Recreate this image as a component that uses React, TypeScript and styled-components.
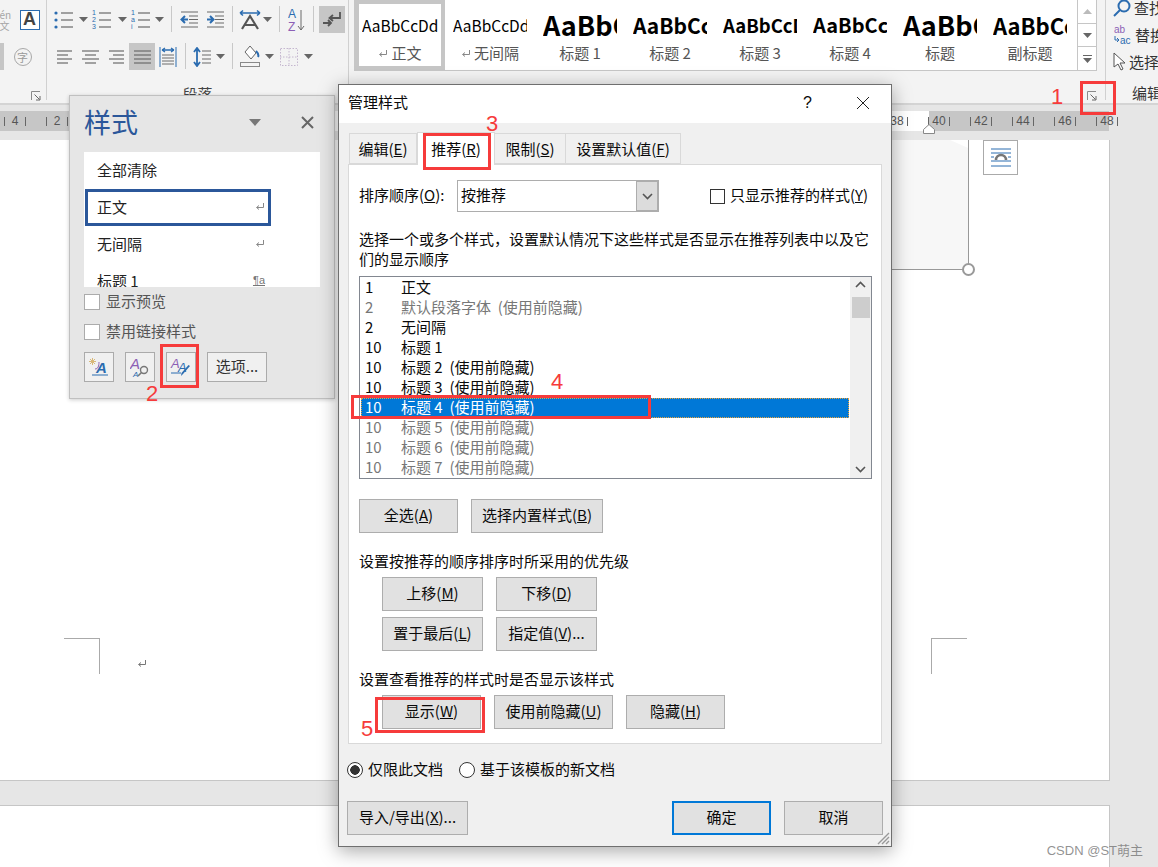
import React from "react"
import styled, { createGlobalStyle } from "styled-components"

const GlobalStyle = createGlobalStyle`
    html, body { margin: 0; padding: 0; background: #fff; }
    body { font-family: "Noto Sans CJK SC", "Liberation Sans", sans-serif; overflow: hidden; }
    * { box-sizing: border-box; }
`

const RED = "#f63b3b"
const BLUE = "#2b6cb0"
const GRAY = "#6a6a6a"

const Screen = styled.div`
    position: relative;
    width: 1158px;
    height: 867px;
    overflow: hidden;
    background: #e6e6e6;
`
// Noto sits a little low in its line box, this lifts a label by 2px
const Lift = styled.span`
    display: block;
    padding-bottom: 4px;
    white-space: nowrap;
`

/* ribbon */
const Ribbon = styled.div`
    display: flex;
    height: 105px;
    background: #f3f3f3;
    border-bottom: 2px solid #d4d4d4;
    overflow: hidden;
`
const RibbonGroup = styled.div<{ $w: number }>`
    position: relative;
    flex: none;
    width: ${p => p.$w}px;
    height: 100px;
    padding-top: 6px;
    border-right: 1px solid #d0d0d0;
    display: flex;
    flex-direction: column;
    gap: 10px;
`
const ToolRow = styled.div<{ $pad?: number }>`
    display: flex;
    height: 27px;
    padding-left: ${p => p.$pad ?? 0}px;
`
const Tool = styled.div<{ $w: number; $on?: boolean }>`
    flex: none;
    width: ${p => p.$w}px;
    height: 27px;
    display: flex;
    align-items: center;
    justify-content: center;
    background: ${p => (p.$on ? "#c6c6c6" : "transparent")};
    svg { flex: none; }
`
const ToolSep = styled.div<{ $w: number }>`
    flex: none;
    width: ${p => p.$w}px;
    display: flex;
    justify-content: center;
    &::after {
        content: "";
        width: 1px;
        height: 26px;
        background: #c8c8c8;
    }
`
const GroupLabel = styled.div`
    position: absolute;
    left: 0;
    right: 0;
    top: 84px;
    text-align: center;
    font-size: 15px;
    line-height: 20px;
    color: #444;
`
const Launcher = styled.div<{ $right: number }>`
    position: absolute;
    right: ${p => p.$right}px;
    top: 91px;
    line-height: 0;
`
const FontBox = styled.div`
    width: 20px;
    height: 20px;
    border: 1px solid #2b6cb0;
    background: #fff;
    display: flex;
    align-items: center;
    justify-content: center;
    font: bold 18px "Liberation Sans", sans-serif;
    color: #444;
`
const PhoneticText = styled.div`
    width: 12px;
    margin-left: -4px;
    font-size: 10px;
    line-height: 11px;
    color: #a5a5a5;
    overflow: hidden;
`
const CharCircle = styled.div`
    width: 18px;
    height: 18px;
    border: 1px solid #a8a8a8;
    border-radius: 50%;
    display: flex;
    align-items: center;
    justify-content: center;
    font-size: 11px;
    color: #9a9a9a;
`

const GalleryGroup = styled.div`
    position: relative;
    flex: none;
    width: 748px;
    margin-left: 5px;
    height: 100px;
`
const Gallery = styled.div`
    display: flex;
    width: 743px;
    height: 72px;
    margin-top: -1px;
    background: #fff;
    border: 1px solid #c6c6c6;
`
const GalleryItem = styled.div<{ $on?: boolean }>`
    flex: none;
    width: 90px;
    height: 70px;
    padding-top: ${p => (p.$on ? 6 : 10)}px;
    border: ${p => (p.$on ? "4px solid #c6c6c6" : "none")};
    text-align: center;
`
const GalleryPreview = styled.div<{ $size: number; $bold?: boolean; $on?: boolean }>`
    height: 32px;
    margin: 0 ${p => (p.$on ? 3 : 8)}px;
    overflow: hidden;
    white-space: nowrap;
    text-align: left;
    font-family: "Noto Sans CJK SC", sans-serif;
    font-size: ${p => p.$size}px;
    font-weight: ${p => (p.$bold ? 700 : 400)};
    line-height: 30px;
    color: #000;
`
const GalleryName = styled.div`
    display: flex;
    align-items: center;
    justify-content: center;
    gap: 3px;
    font-size: 15px;
    line-height: 22px;
    color: #555;
`
const GalleryScroll = styled.div`
    flex: none;
    width: 19px;
    margin-left: 2px;
    display: flex;
    flex-direction: column;
    border-left: 1px solid #c6c6c6;
`
const ScrollCell = styled.div`
    flex: 1;
    display: flex;
    align-items: center;
    justify-content: center;
    & + & { border-top: 1px solid #c6c6c6; }
`
const EditGroup = styled.div`
    position: relative;
    flex: none;
    margin-left: 3px;
    width: 60px;
    height: 100px;
    padding-left: 7px;
    border-left: 1px solid #d0d0d0;
    display: flex;
    flex-direction: column;
`
const EditRow = styled.div`
    display: flex;
    align-items: center;
    gap: 3px;
    height: 27px;
    margin-top: -6px;
    margin-bottom: 6px;
    font-size: 15px;
    color: #333;
    white-space: nowrap;
    svg { flex: none; }
`
const EditLabel = styled.div`
    position: absolute;
    left: 26px;
    top: 83px;
    font-size: 15px;
    line-height: 20px;
    color: #333;
    white-space: nowrap;
`

/* ruler */
const RulerBar = styled.div`
    height: 35px;
    padding-top: 6px;
`
const RulerTrack = styled.div`
    position: relative;
    display: flex;
    width: 1109px;
    height: 20px;
    background: linear-gradient(90deg, #c6c6c6 0 69px, #fff 69px 929px, #c6c6c6 929px);
`
const RulerStrip = styled.div`
    display: flex;
    margin-left: -6px;
`
const RulerCell = styled.div`
    flex: none;
    width: 42px;
    height: 20px;
    display: flex;
    align-items: center;
    justify-content: space-between;
    padding: 0 10px;
    font: 12px/20px "Liberation Sans", sans-serif;
    color: #555;
    &::before, &::after {
        content: "";
        width: 1px;
        height: 9px;
        background: #666;
    }
`
const TabMarker = styled.div`
    position: absolute;
    left: 923px;
    top: 13px;
    line-height: 0;
`

/* document */
const Workspace = styled.div`
    display: flex;
    height: 727px;
`
const Pages = styled.div`
    flex: none;
    width: 1110px;
    display: flex;
    flex-direction: column;
    gap: 24px;
`
const Page = styled.div`
    position: relative;
    height: 641px;
    background: #fff;
    border-right: 1px solid #c6c6c6;
    border-bottom: 1px solid #c6c6c6;
`
const NextPage = styled.div`
    height: 62px;
    background: #fff;
    border-right: 1px solid #c6c6c6;
    border-top: 1px solid #c6c6c6;
`
const CropMark = styled.div<{ $x: number }>`
    position: absolute;
    left: ${p => p.$x}px;
    top: 498px;
    width: 36px;
    height: 36px;
    border-top: 1px solid #aaa;
    border-right: ${p => (p.$x < 500 ? "1px solid #aaa" : "none")};
    border-left: ${p => (p.$x > 500 ? "1px solid #aaa" : "none")};
`
const ParaMark = styled.div`
    position: absolute;
    left: 137px;
    top: 519px;
    line-height: 0;
`
const PictureFrame = styled.div`
    position: absolute;
    left: 700px;
    top: 0;
    width: 269px;
    height: 130px;
    background: #f7f7f7;
    border-right: 1px solid #999;
    border-bottom: 1px solid #999;
    &::before {
        content: "";
        position: absolute;
        right: 0;
        top: 0;
        width: 18px;
        height: 8px;
        background: #fff;
        clip-path: polygon(0 0, 100% 0, 100% 100%);
    }
`
const PictureHandle = styled.div`
    position: absolute;
    right: -7px;
    bottom: -7px;
    width: 13px;
    height: 13px;
    border: 2px solid #999;
    border-radius: 50%;
    background: #fff;
`
const LayoutButton = styled.div`
    position: absolute;
    left: 983px;
    top: 0;
    width: 35px;
    height: 35px;
    background: #fff;
    border: 1px solid #aaa;
    display: flex;
    align-items: center;
    justify-content: center;
`
const Gutter = styled.div`
    flex: 1;
    background: #e6e6e6;
`

/* styles pane */
const Pane = styled.div`
    position: absolute;
    left: 69px;
    top: 95px;
    width: 266px;
    height: 304px;
    background: #e6e6e6;
    border: 1px solid #c0c0c0;
    box-shadow: 0 1px 4px rgba(0, 0, 0, 0.2);
    padding: 0 14px;
`
const PaneHeader = styled.div`
    height: 56px;
    padding-bottom: 4px;
    display: flex;
    align-items: center;
    justify-content: space-between;
    padding-right: 6px;
`
const PaneTitleText = styled.div`
    font-size: 27px;
    line-height: 40px;
    color: #2b579a;
`
const PaneActions = styled.div`
    display: flex;
    align-items: center;
    gap: 40px;
    line-height: 0;
`
const StyleList = styled.div`
    height: 135px;
    background: #fff;
    overflow: hidden;
`
const StyleRow = styled.div<{ $on?: boolean }>`
    width: 186px;
    height: 37px;
    margin-left: 1px;
    padding: 0 3px 3px 9px;
    display: flex;
    align-items: center;
    justify-content: space-between;
    font-size: 15px;
    color: #222;
    border: 3px solid ${p => (p.$on ? "#2b579a" : "transparent")};
    svg { flex: none; }
`
const ParaSign = styled.span`
    font: 11px "Liberation Sans", sans-serif;
    color: #777;
    text-decoration: underline;
`
const PaneCheck = styled.label`
    display: flex;
    align-items: center;
    gap: 6px;
    height: 16px;
    margin-top: 14px;
    font-size: 15px;
    color: #555;
    &:first-of-type { margin-top: 7px; }
`
const PaneBox = styled.span`
    width: 16px;
    height: 16px;
    background: #fff;
    border: 1px solid #ababab;
`
const PaneTools = styled.div`
    display: flex;
    gap: 11px;
    margin-top: 12px;
`
const PaneTool = styled.div<{ $w?: number }>`
    width: ${p => p.$w ?? 30}px;
    height: 30px;
    background: #f0f0f0;
    border: 1px solid #ababab;
    display: flex;
    align-items: center;
    justify-content: center;
    font-size: 15px;
    color: #333;
`

/* dialog */
const Dialog = styled.div`
    position: absolute;
    left: 338px;
    top: 84px;
    width: 554px;
    height: 763px;
    background: #f0f0f0;
    border: 1px solid #6f6f6f;
    box-shadow: 0 4px 18px rgba(0, 0, 0, 0.35);
    font-size: 15px;
    color: #0a0a0a;
    display: flex;
    flex-direction: column;
`
const TitleBar = styled.div`
    flex: none;
    height: 38px;
    background: #fff;
    display: flex;
    align-items: center;
    justify-content: space-between;
    padding: 0 21px 2px 9px;
`
const TitleActions = styled.div`
    display: flex;
    align-items: center;
    gap: 44px;
    font: 16px "Liberation Sans", sans-serif;
`
const DialogBody = styled.div`
    flex: 1;
    padding: 0 9px;
    position: relative;
`
const TabRow = styled.div`
    display: flex;
    align-items: flex-end;
    height: 41px;
    padding-left: 1px;
`
const Tab = styled.div<{ $w: number; $on?: boolean }>`
    width: ${p => p.$w}px;
    height: ${p => (p.$on ? 33 : 31)}px;
    margin-bottom: ${p => (p.$on ? -1 : 0)}px;
    padding-bottom: ${p => (p.$on ? 1 : 0)}px;
    background: ${p => (p.$on ? "#fff" : "#f0f0f0")};
    border: 1px solid #d9d9d9;
    border-bottom: ${p => (p.$on ? "none" : "1px solid #d9d9d9")};
    border-left: ${p => (p.$on ? "1px solid #d9d9d9" : "none")};
    display: flex;
    align-items: center;
    justify-content: center;
    white-space: nowrap;
    position: relative;
    &:first-child { border-left: 1px solid #d9d9d9; }
`
const TabPanel = styled.div`
    height: 580px;
    background: #fff;
    border: 1px solid #d9d9d9;
    padding: 15px 9px 14px 10px;
`
const SortRow = styled.div`
    display: flex;
    align-items: center;
    height: 32px;
`
const SortLabel = styled(Lift)`
    width: 98px;
`
const SelectBox = styled.div`
    width: 202px;
    height: 32px;
    border: 1px solid #adadad;
    display: flex;
    justify-content: space-between;
    align-items: center;
    padding-left: 3px;
`
const SelectArrow = styled.div`
    width: 22px;
    height: 30px;
    background: #dcdcdc;
    border: 1px solid #adadad;
    display: flex;
    align-items: center;
    justify-content: center;
`
const OnlyCheck = styled.label`
    margin-left: auto;
    margin-right: 4px;
    display: flex;
    align-items: center;
    gap: 5px;
`
const CheckBox = styled.span`
    width: 15px;
    height: 15px;
    background: #fff;
    border: 1px solid #333;
`
const Paragraph = styled.p`
    margin: 17px 0 7px;
    line-height: 20px;
`
const ListBox = styled.div`
    position: relative;
    height: 203px;
    border: 1px solid #828790;
    padding: 1px 22px 0 1px;
    overflow: hidden;
`
const ListRow = styled.div<{ $muted?: boolean; $on?: boolean }>`
    display: flex;
    height: 20px;
    line-height: 18px;
    padding-left: 4px;
    white-space: pre;
    color: ${p => (p.$on ? "#fff" : p.$muted ? "#777" : "#0a0a0a")};
    background: ${p => (p.$on ? "#0078d7" : "transparent")};
    outline: ${p => (p.$on ? "1px dotted #e8a33d" : "none")};
    outline-offset: -1px;
`
const ListNum = styled.span`
    width: 36px;
`
const ListScroll = styled.div`
    position: absolute;
    right: 0;
    top: 0;
    bottom: 0;
    width: 21px;
    background: #f0f0f0;
    display: flex;
    flex-direction: column;
    align-items: center;
    padding-top: 4px;
    svg { display: block; }
`
const ScrollThumb = styled.div`
    width: 18px;
    height: 21px;
    margin-top: 9px;
    background: #cdcdcd;
`
const ScrollDown = styled.div`
    margin-top: auto;
    margin-bottom: 5px;
    line-height: 0;
`
const ButtonRow = styled.div<{ $top: number; $indent?: number }>`
    display: flex;
    gap: 13px;
    margin-top: ${p => p.$top}px;
    padding-left: ${p => p.$indent ?? 0}px;
`
const Button = styled.div<{ $w: number; $primary?: boolean }>`
    width: ${p => p.$w}px;
    height: 34px;
    padding-bottom: 3px;
    background: #e1e1e1;
    border: ${p => (p.$primary ? "2px solid #0078d7" : "1px solid #adadad")};
    display: flex;
    align-items: center;
    justify-content: center;
    white-space: nowrap;
`
const SectionLabel = styled.div`
    margin-top: 18px;
    line-height: 20px;
`
const RadioRow = styled.div`
    display: flex;
    align-items: center;
    height: 20px;
    margin-top: 16px;
    margin-left: -1px;
`
const Radio = styled.span<{ $on?: boolean }>`
    width: 16px;
    height: 16px;
    margin-right: 5px;
    border: 1px solid #333;
    border-radius: 50%;
    background: ${p => (p.$on ? "radial-gradient(circle, #333 0 4.5px, #fff 5px)" : "#fff")};
`
const RadioText = styled(Lift)`
    margin-right: 16px;
`
const Footer = styled.div`
    display: flex;
    justify-content: space-between;
    margin: 21px -1px 0 -1px;
`
const FooterRight = styled.div`
    display: flex;
    gap: 13px;
`
const ResizeGrip = styled.div`
    position: absolute;
    right: 1px;
    bottom: 1px;
    line-height: 0;
`

/* annotations */
const RedBox = styled.div<{ $x: number; $y: number; $w: number; $h: number }>`
    position: absolute;
    left: ${p => p.$x}px;
    top: ${p => p.$y}px;
    width: ${p => p.$w}px;
    height: ${p => p.$h}px;
    border: 3px solid ${RED};
`
const RedNum = styled.div<{ $x: number; $y: number }>`
    position: absolute;
    left: ${p => p.$x}px;
    top: ${p => p.$y}px;
    font: 22px/24px "Liberation Sans", sans-serif;
    color: ${RED};
`
const Watermark = styled.div`
    position: absolute;
    right: 15px;
    top: 841px;
    font: 13px/20px "Liberation Sans", "Noto Sans CJK SC", sans-serif;
    color: rgba(110, 110, 110, 0.75);
`

/* drawings */
const Caret = () => (
    <svg width="9" height="5"><path d="M0 0h9L4.5 5z" fill="#666" /></svg>
)
const ReturnMark = ({ c = "#888" }: { c?: string }) => (
    <svg width="10" height="9" fill="none" stroke={c} strokeWidth="1">
        <path d="M8.5 1v4.5H2M4 3.5L1.5 5.5 4 7.5" />
    </svg>
)
const Hlines = ({ ys, x1, x2, w = 18, h = 22 }: { ys: number[]; x1: number[]; x2: number[]; w?: number; h?: number }) => (
    <svg width={w} height={h} stroke={GRAY} strokeWidth="1.2">
        {ys.map((y, i) => <line key={y} x1={x1[i % x1.length]} x2={x2[i % x2.length]} y1={y} y2={y} />)}
    </svg>
)
const ListIcon = ({ marks }: { marks: string[] }) => (
    <svg width="20" height="22" fontFamily="Liberation Sans" fontSize="7" fill={BLUE}>
        {marks.map((m, i) => (
            <g key={i}>
                {m === "•" ? <circle cx="2" cy={4 + i * 7} r="1.6" /> : <text x="0" y={6 + i * 7}>{m}</text>}
                <line x1="7" x2="19" y1={4 + i * 7} y2={4 + i * 7} stroke={GRAY} strokeWidth="1.2" />
            </g>
        ))}
    </svg>
)
const IndentIcon = ({ right }: { right?: boolean }) => (
    <svg width="19" height="19" fill="none">
        <g stroke={GRAY} strokeWidth="1.2">
            <path d="M1 2h17M9 6h9M9 9.5h9M9 13h9M1 17h17" />
        </g>
        <path d={right ? "M1 9.5h6M4 6l3.5 3.5L4 13" : "M8 9.5H2M5 6L1.5 9.5 5 13"} stroke={BLUE} strokeWidth="2" />
    </svg>
)
const TextDirIcon = () => (
    <svg width="22" height="22" fill="none">
        <path d="M1 4h20M1 4l3-2.5M1 4l3 2.5M21 4l-3-2.5M21 4l-3 2.5" stroke={BLUE} strokeWidth="1.6" />
        <path d="M3 20l8-13 8 13M6 16h10" stroke="#555" strokeWidth="2.2" />
    </svg>
)
const SortIcon = () => (
    <svg width="18" height="26" fontFamily="Liberation Sans" fontSize="12">
        <text x="0" y="11" fill={BLUE}>A</text>
        <text x="0" y="24" fill="#8c5fb5">Z</text>
        <path d="M13 3v20M10 19l3 4 3-4" fill="none" stroke={GRAY} />
    </svg>
)
const PilcrowIcon = () => (
    <svg width="20" height="18" fill="none" stroke="#555" strokeWidth="1.8">
        <path d="M18 1v6H8M11 4L7.5 7 11 10" />
        <path d="M1 12h8M6 9l3 3-3 3" />
    </svg>
)
const DistributeIcon = () => (
    <svg width="18" height="20" fill="none">
        <path d="M1 0v20M17 0v20" stroke={BLUE} />
        <path d="M3 3h12M3 3l3-2M3 3l3 2M15 3l-3-2M15 3l-3 2" stroke={BLUE} strokeWidth="1.3" />
        <path d="M3 8h12M3 11h12M3 14h12M3 17h12" stroke={GRAY} />
    </svg>
)
const LineSpaceIcon = () => (
    <svg width="18" height="20" fill="none">
        <path d="M4 2v16M1 5l3-4 3 4M1 15l3 4 3-4" stroke={BLUE} strokeWidth="1.8" />
        <path d="M9 4h9M9 8h9M9 12h9M9 16h9" stroke={GRAY} strokeWidth="1.2" />
    </svg>
)
const ShadingIcon = () => (
    <svg width="20" height="23" fill="none">
        <path d="M10 1l6 7-5 6-6-7z" stroke="#666" fill="#fff" />
        <path d="M16 6c2 2 3 4 2 6" stroke={BLUE} strokeWidth="2" />
        <rect x="0.5" y="17.5" width="19" height="4" stroke="#888" />
    </svg>
)
const BorderIcon = () => (
    <svg width="18" height="18" fill="none" stroke="#c4b6cf" strokeDasharray="1.5 1.5">
        <rect x="0.5" y="0.5" width="17" height="17" />
        <path d="M9 0v18M0 9h18" />
    </svg>
)
const LauncherIcon = () => (
    <svg width="10" height="10" fill="none" stroke="#8a8a8a">
        <path d="M.5 9V.5H9" />
        <path d="M3.5 3.5l5 5M9 5v4H5" stroke="#666" />
    </svg>
)
const SearchIcon = () => (
    <svg width="18" height="18" fill="none" stroke="#2b6cb0" strokeWidth="2">
        <circle cx="11" cy="7" r="5.5" /><path d="M7 11l-6 6" />
    </svg>
)
const ReplaceIcon = () => (
    <svg width="19" height="22" fontFamily="Liberation Sans" fontSize="10">
        <text x="1" y="9" fill="#8c5fb5">ab</text>
        <text x="7" y="20" fill={BLUE}>ac</text>
        <path d="M2 12v4h4M4 14l2 2-2 2" fill="none" stroke={BLUE} />
    </svg>
)
const CursorIcon = () => (
    <svg width="13" height="19" fill="#fff" stroke="#555"><path d="M1 1v14l4-3 3 6 2-1-3-6h5z" /></svg>
)
const WrapIcon = () => (
    <svg width="20" height="19" fill="none">
        <path d="M0 1h20M0 5h20M0 13h20M0 18h20M0 9h3M17 9h3" stroke={BLUE} />
        <path d="M5 12a5 5 0 0110 0" stroke="#777" strokeWidth="2.6" />
    </svg>
)
const NewStyleIcon = () => (
    <svg width="20" height="20" fontFamily="Liberation Sans" fontSize="15" fontStyle="italic" fontWeight="700">
        <path d="M1 2l5 5M6 2L1 7M3.5 1v7M0 4.5h7" stroke="#d8b878" />
        <path d="M6 12c3 0 4-3 4-7" stroke="#8c5fb5" fill="none" />
        <text x="7" y="16" fill={BLUE}>A</text>
        <line x1="3" x2="19" y1="18" y2="18" stroke={BLUE} />
    </svg>
)
const InspectIcon = () => (
    <svg width="20" height="20" fontFamily="Liberation Sans" fontSize="15" fontStyle="italic">
        <text x="0" y="12" fill="#8c5fb5">A</text>
        <text x="3" y="20" fontSize="8" fill={BLUE}>A</text>
        <circle cx="14" cy="13" r="3.5" fill="none" stroke="#777" strokeWidth="1.4" />
        <path d="M11.5 15.5L8 19" stroke="#777" strokeWidth="1.6" />
    </svg>
)
const ManageIcon = () => (
    <svg width="22" height="20" fontFamily="Liberation Sans" fontSize="13" fontStyle="italic">
        <text x="1" y="11" fill="#8c5fb5">A</text>
        <text x="8" y="15" fill={BLUE}>A</text>
        <line x1="1" x2="11" y1="16" y2="16" stroke={BLUE} />
        <path d="M20 9l-7 8-2 2 .5-3 7-8z" fill={BLUE} />
    </svg>
)
const Chevron = ({ up }: { up?: boolean }) => (
    <svg width="11" height="7" fill="none" stroke="#555" strokeWidth="1.6">
        <path d={up ? "M1 6l4.5-4.5L10 6" : "M1 1l4.5 4.5L10 1"} />
    </svg>
)
const CloseX = ({ size, c, w }: { size: number; c: string; w: number }) => (
    <svg width={size} height={size} stroke={c} strokeWidth={w}>
        <path d={`M1 1L${size - 1} ${size - 1}M${size - 1} 1L1 ${size - 1}`} />
    </svg>
)

const gallery = [
    { preview: "AaBbCcDd", name: "正文", size: 15.5, mark: true, on: true },
    { preview: "AaBbCcDd", name: "无间隔", size: 15.5, mark: true },
    { preview: "AaBbC", name: "标题 1", size: 27, bold: true },
    { preview: "AaBbCc", name: "标题 2", size: 21, bold: true },
    { preview: "AaBbCcD", name: "标题 3", size: 18.5, bold: true },
    { preview: "AaBbCc", name: "标题 4", size: 20, bold: true },
    { preview: "AaBbC", name: "标题", size: 27, bold: true },
    { preview: "AaBbCc", name: "副标题", size: 22, bold: true },
]

const listRows: { n: number; t: string; muted?: boolean; on?: boolean }[] = [
    { n: 1, t: "正文" },
    { n: 2, t: "默认段落字体  (使用前隐藏)", muted: true },
    { n: 2, t: "无间隔" },
    { n: 10, t: "标题 1" },
    { n: 10, t: "标题 2  (使用前隐藏)" },
    { n: 10, t: "标题 3  (使用前隐藏)" },
    { n: 10, t: "标题 4  (使用前隐藏)", on: true },
    { n: 10, t: "标题 5  (使用前隐藏)", muted: true },
    { n: 10, t: "标题 6  (使用前隐藏)", muted: true },
    { n: 10, t: "标题 7  (使用前隐藏)", muted: true },
]

// cells 2..20 lie under the two windows, only the outer ones show a number
const rulerCells = Array.from({ length: 27 }, (_, i) => (i < 2 || i > 20 ? String(Math.abs(2 * (i - 2))) : ""))

export default function App() {
    return (
        <Screen>
            <GlobalStyle />
            <Ribbon>
                <RibbonGroup $w={47}>
                    <ToolRow>
                        <Tool $w={15}><PhoneticText>én文</PhoneticText></Tool>
                        <Tool $w={29}><FontBox>A</FontBox></Tool>
                    </ToolRow>
                    <ToolRow>
                        <Tool $w={4} $on />
                        <Tool $w={37}><CharCircle>字</CharCircle></Tool>
                    </ToolRow>
                    <Launcher $right={5}><LauncherIcon /></Launcher>
                </RibbonGroup>
                <RibbonGroup $w={302}>
                    <ToolRow $pad={6}>
                        <Tool $w={22}><ListIcon marks={["•", "•", "•"]} /></Tool>
                        <Tool $w={16}><Caret /></Tool>
                        <Tool $w={22}><ListIcon marks={["1", "2", "3"]} /></Tool>
                        <Tool $w={18}><Caret /></Tool>
                        <Tool $w={20}><ListIcon marks={["1", "a", "i"]} /></Tool>
                        <Tool $w={16}><Caret /></Tool>
                        <ToolSep $w={8} />
                        <Tool $w={28}><IndentIcon /></Tool>
                        <Tool $w={24}><IndentIcon right /></Tool>
                        <ToolSep $w={10} />
                        <Tool $w={26}><TextDirIcon /></Tool>
                        <Tool $w={8}><Caret /></Tool>
                        <ToolSep $w={16} />
                        <Tool $w={20}><SortIcon /></Tool>
                        <ToolSep $w={12} />
                        <Tool $w={26} $on><PilcrowIcon /></Tool>
                    </ToolRow>
                    <ToolRow $pad={4}>
                        <Tool $w={26}><Hlines w={15} h={16} ys={[2, 6, 10, 14]} x1={[0]} x2={[15, 11]} /></Tool>
                        <Tool $w={26}><Hlines w={17} h={16} ys={[2, 6, 10, 14]} x1={[0, 3]} x2={[17, 14]} /></Tool>
                        <Tool $w={26}><Hlines w={15} h={16} ys={[2, 6, 10, 14]} x1={[0, 4]} x2={[15]} /></Tool>
                        <Tool $w={26} $on><Hlines w={17} h={16} ys={[2, 6, 10, 14]} x1={[0]} x2={[17]} /></Tool>
                        <Tool $w={26}><DistributeIcon /></Tool>
                        <ToolSep $w={8} />
                        <Tool $w={26}><LineSpaceIcon /></Tool>
                        <Tool $w={10}><Caret /></Tool>
                        <ToolSep $w={14} />
                        <Tool $w={22}><ShadingIcon /></Tool>
                        <Tool $w={16}><Caret /></Tool>
                        <Tool $w={24}><BorderIcon /></Tool>
                        <Tool $w={14}><Caret /></Tool>
                    </ToolRow>
                    <GroupLabel>段落</GroupLabel>
                </RibbonGroup>
                <GalleryGroup>
                    <Gallery>
                        {gallery.map(g => (
                            <GalleryItem key={g.name} $on={g.on}>
                                <GalleryPreview $size={g.size} $bold={g.bold} $on={g.on}>{g.preview}</GalleryPreview>
                                <GalleryName>{g.mark && <ReturnMark />}{g.name}</GalleryName>
                            </GalleryItem>
                        ))}
                        <GalleryScroll>
                            <ScrollCell><svg width="9" height="5"><path d="M0 5h9L4.5 0z" fill="#bbb" /></svg></ScrollCell>
                            <ScrollCell><Caret /></ScrollCell>
                            <ScrollCell>
                                <svg width="9" height="8"><path d="M0 0h9v1H0zM0 3h9L4.5 8z" fill="#666" /></svg>
                            </ScrollCell>
                        </GalleryScroll>
                    </Gallery>
                    <Launcher $right={5}><LauncherIcon /></Launcher>
                </GalleryGroup>
                <EditGroup>
                    <EditRow><SearchIcon />查找</EditRow>
                    <EditRow><ReplaceIcon />替换</EditRow>
                    <EditRow><CursorIcon />选择</EditRow>
                    <EditLabel>编辑</EditLabel>
                </EditGroup>
            </Ribbon>

            <RulerBar>
                <RulerTrack>
                    <RulerStrip>
                        {rulerCells.map((v, i) => <RulerCell key={i}>{v}</RulerCell>)}
                    </RulerStrip>
                    <TabMarker>
                        <svg width="12" height="10"><path d="M.5 9.5v-4L6 .5l5.5 5v4z" fill="#fff" stroke="#888" /></svg>
                    </TabMarker>
                </RulerTrack>
            </RulerBar>

            <Workspace>
                <Pages>
                    <Page>
                        <PictureFrame><PictureHandle /></PictureFrame>
                        <LayoutButton><WrapIcon /></LayoutButton>
                        <CropMark $x={64} />
                        <CropMark $x={931} />
                        <ParaMark><ReturnMark c="#777" /></ParaMark>
                    </Page>
                    <NextPage />
                </Pages>
                <Gutter />
            </Workspace>

            <Pane>
                <PaneHeader>
                    <PaneTitleText>样式</PaneTitleText>
                    <PaneActions>
                        <svg width="12" height="7"><path d="M0 0h12L6 7z" fill="#777" /></svg>
                        <CloseX size={13} c="#666" w={2} />
                    </PaneActions>
                </PaneHeader>
                <StyleList>
                    <StyleRow>全部清除</StyleRow>
                    <StyleRow $on>正文<ReturnMark /></StyleRow>
                    <StyleRow>无间隔<ReturnMark /></StyleRow>
                    <StyleRow>标题 1<ParaSign>¶a</ParaSign></StyleRow>
                </StyleList>
                <PaneCheck><PaneBox /><Lift>显示预览</Lift></PaneCheck>
                <PaneCheck><PaneBox /><Lift>禁用链接样式</Lift></PaneCheck>
                <PaneTools>
                    <PaneTool><NewStyleIcon /></PaneTool>
                    <PaneTool><InspectIcon /></PaneTool>
                    <PaneTool><ManageIcon /></PaneTool>
                    <PaneTool $w={60}><Lift>选项...</Lift></PaneTool>
                </PaneTools>
            </Pane>

            <Dialog>
                <TitleBar>
                    <Lift>管理样式</Lift>
                    <TitleActions>
                        <span>?</span>
                        <CloseX size={14} c="#222" w={1} />
                    </TitleActions>
                </TitleBar>
                <DialogBody>
                    <TabRow>
                        <Tab $w={68}>编辑(<u>E</u>)</Tab>
                        <Tab $w={78} $on>推荐(<u>R</u>)</Tab>
                        <Tab $w={71}>限制(<u>S</u>)</Tab>
                        <Tab $w={115}>设置默认值(<u>F</u>)</Tab>
                    </TabRow>
                    <TabPanel>
                        <SortRow>
                            <SortLabel>排序顺序(<u>O</u>):</SortLabel>
                            <SelectBox>
                                <Lift>按推荐</Lift>
                                <SelectArrow><Chevron /></SelectArrow>
                            </SelectBox>
                            <OnlyCheck><CheckBox /><Lift>只显示推荐的样式(<u>Y</u>)</Lift></OnlyCheck>
                        </SortRow>
                        <Paragraph>{"选择一个或多个样式\uFF0C设置默认情况下这些样式是否显示在推荐列表中以及它们的显示顺序"}</Paragraph>
                        <ListBox>
                            {listRows.map(r => (
                                <ListRow key={r.t} $muted={r.muted} $on={r.on}>
                                    <ListNum>{r.n}</ListNum>{r.t}
                                </ListRow>
                            ))}
                            <ListScroll>
                                <Chevron up />
                                <ScrollThumb />
                                <ScrollDown><Chevron /></ScrollDown>
                            </ListScroll>
                        </ListBox>
                        <ButtonRow $top={20}>
                            <Button $w={99}>全选(<u>A</u>)</Button>
                            <Button $w={132}>选择内置样式(<u>B</u>)</Button>
                        </ButtonRow>
                        <SectionLabel>设置按推荐的顺序排序时所采用的优先级</SectionLabel>
                        <ButtonRow $top={6} $indent={23}>
                            <Button $w={101}>上移(<u>M</u>)</Button>
                            <Button $w={101}>下移(<u>D</u>)</Button>
                        </ButtonRow>
                        <ButtonRow $top={6} $indent={23}>
                            <Button $w={101}>置于最后(<u>L</u>)</Button>
                            <Button $w={101}>指定值(<u>V</u>)...</Button>
                        </ButtonRow>
                        <SectionLabel>设置查看推荐的样式时是否显示该样式</SectionLabel>
                        <ButtonRow $top={6} $indent={23}>
                            <Button $w={99}>显示(<u>W</u>)</Button>
                            <Button $w={119}>使用前隐藏(<u>U</u>)</Button>
                            <Button $w={99}>隐藏(<u>H</u>)</Button>
                        </ButtonRow>
                    </TabPanel>
                    <RadioRow>
                        <Radio $on /><RadioText>仅限此文档</RadioText>
                        <Radio /><RadioText>基于该模板的新文档</RadioText>
                    </RadioRow>
                    <Footer>
                        <Button $w={121}>导入/导出(<u>X</u>)...</Button>
                        <FooterRight>
                            <Button $w={99} $primary>确定</Button>
                            <Button $w={99}>取消</Button>
                        </FooterRight>
                    </Footer>
                </DialogBody>
                <ResizeGrip>
                    <svg width="13" height="13" stroke="#999" strokeWidth="1.4"><path d="M12 1L1 12M12 5L5 12M12 9L9 12" /></svg>
                </ResizeGrip>
            </Dialog>

            <RedBox $x={1080} $y={81} $w={36} $h={34} />
            <RedBox $x={160} $y={344} $w={39} $h={44} />
            <RedBox $x={423} $y={133} $w={68} $h={37} />
            <RedBox $x={351} $y={395} $w={300} $h={24} />
            <RedBox $x={375} $y={697} $w={110} $h={36} />
            <RedNum $x={1051} $y={85}>1</RedNum>
            <RedNum $x={146} $y={382}>2</RedNum>
            <RedNum $x={486} $y={112}>3</RedNum>
            <RedNum $x={551} $y={370}>4</RedNum>
            <RedNum $x={361} $y={717}>5</RedNum>
            <Watermark>CSDN @ST萌主</Watermark>
        </Screen>
    )
}
